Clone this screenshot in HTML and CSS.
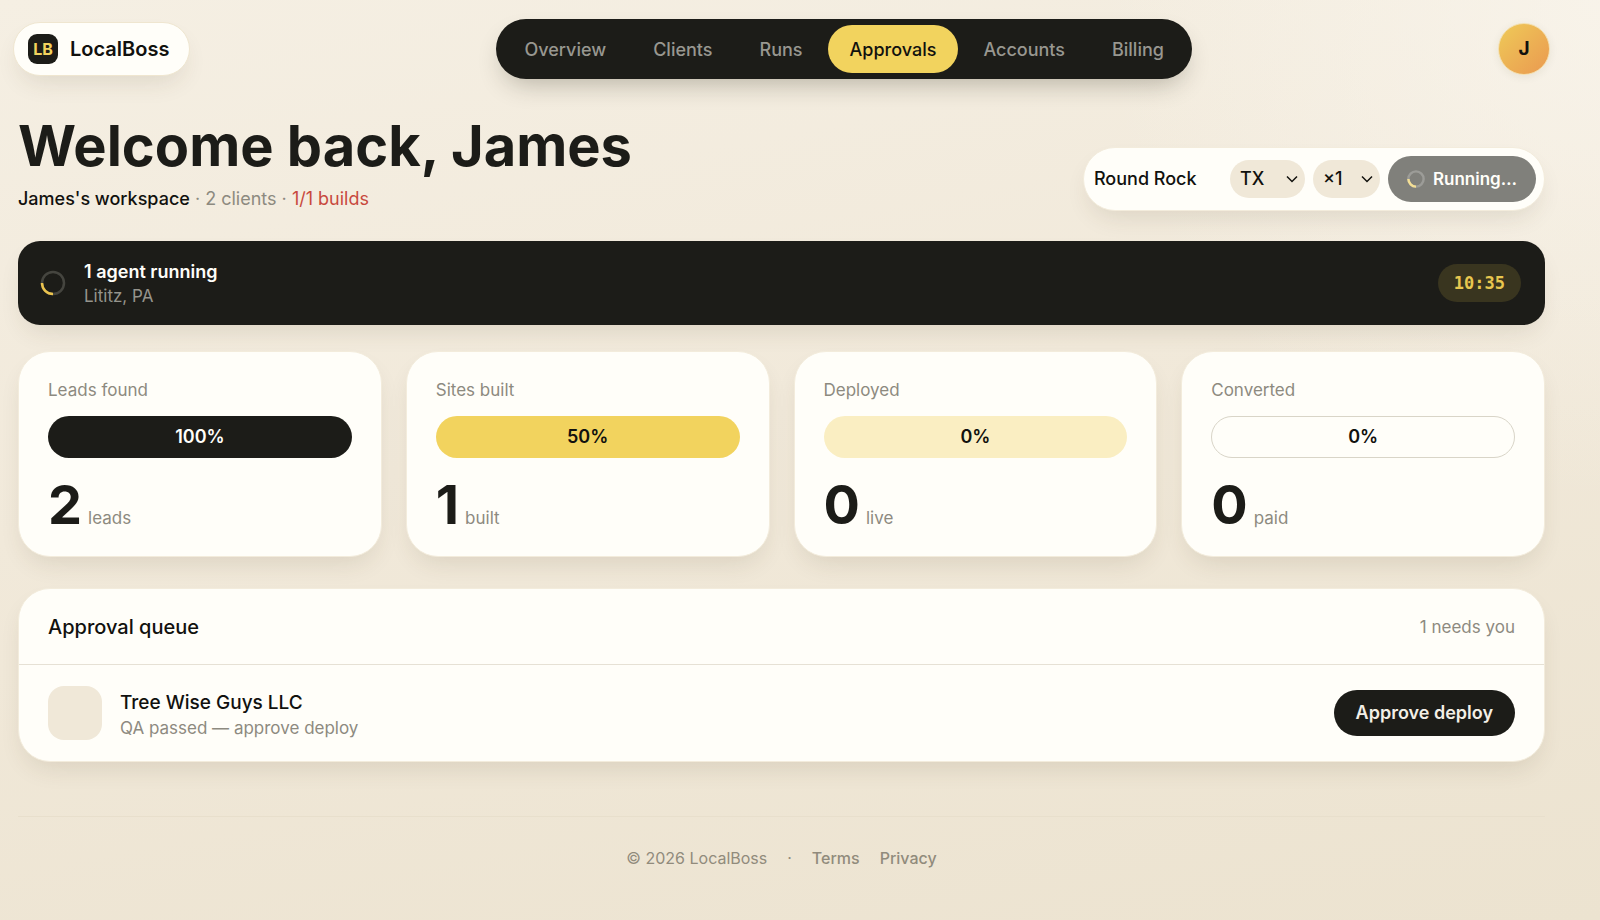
FILE: index.html
```html
<!DOCTYPE html>
<html lang="en">
  <head>
    <meta charset="utf-8">
    <meta name="viewport" content="width=device-width, initial-scale=1">
    <title>LocalBoss</title>
    <link rel="stylesheet" href="styles.css">
  </head>
  <body>
    <header class="topbar">
      <a class="brand" href="#">
        <span class="brand-mark">LB</span>
        <span>LocalBoss</span>
      </a>
      <nav class="nav">
        <a class="nav-link" href="#">Overview</a>
        <a class="nav-link" href="#">Clients</a>
        <a class="nav-link" href="#">Runs</a>
        <a class="nav-link active" href="#" aria-current="page">Approvals</a>
        <a class="nav-link" href="#">Accounts</a>
        <a class="nav-link" href="#">Billing</a>
      </nav>
      <button class="avatar" type="button" aria-label="Account">J</button>
    </header>

    <main class="page">
      <section class="hero">
        <div>
          <h1>Welcome back, James</h1>
          <p class="meta"><strong>James's workspace</strong> · 2 clients · <span class="limit">1/1 builds</span></p>
        </div>
        <form class="run-form">
          <input class="city" type="text" value="Round Rock" aria-label="City">
          <div class="select state">
            <select aria-label="State"><option>TX</option></select>
            <svg class="chevron" viewBox="0 0 12 12"><path d="M1 3.500 6 8.500 11 3.500"/></svg>
          </div>
          <div class="select count">
            <select aria-label="Count"><option>×1</option></select>
            <svg class="chevron" viewBox="0 0 12 12"><path d="M1 3.500 6 8.500 11 3.500"/></svg>
          </div>
          <button class="run-btn" type="button" disabled>
            <svg class="spinner small" viewBox="0 0 26 26">
              <circle class="track" cx="13" cy="13" r="11"/>
              <path class="arc" d="M13 24A11 11 0 0 1 2 13"/>
            </svg>
            Running…
          </button>
        </form>
      </section>

      <section class="agent">
        <svg class="spinner" viewBox="0 0 26 26">
          <circle class="track" cx="13" cy="13" r="11"/>
          <path class="arc" d="M13 24A11 11 0 0 1 2 13"/>
        </svg>
        <div class="agent-text">
          <div class="agent-title">1 agent running</div>
          <div class="agent-place">Lititz, PA</div>
        </div>
        <span class="timer">10:35</span>
      </section>

      <section class="stats">
        <div class="card stat">
          <div class="label">Leads found</div>
          <div class="bar dark">100%</div>
          <div class="figure"><span class="num">2</span><span class="unit">leads</span></div>
        </div>
        <div class="card stat">
          <div class="label">Sites built</div>
          <div class="bar gold">50%</div>
          <div class="figure"><span class="num">1</span><span class="unit">built</span></div>
        </div>
        <div class="card stat">
          <div class="label">Deployed</div>
          <div class="bar pale">0%</div>
          <div class="figure"><span class="num">0</span><span class="unit">live</span></div>
        </div>
        <div class="card stat">
          <div class="label">Converted</div>
          <div class="bar outline">0%</div>
          <div class="figure"><span class="num">0</span><span class="unit">paid</span></div>
        </div>
      </section>

      <section class="card queue">
        <div class="queue-head">
          <h2>Approval queue</h2>
          <span class="label">1 needs you</span>
        </div>
        <div class="queue-row">
          <div class="thumb"></div>
          <div class="queue-text">
            <div class="queue-name">Tree Wise Guys LLC</div>
            <div class="queue-note">QA passed — approve deploy</div>
          </div>
          <button class="approve" type="button">Approve deploy</button>
        </div>
      </section>

      <footer class="footer">
        <span>© 2026 LocalBoss</span>
        <span class="dot">·</span>
        <a href="#">Terms</a>
        <a href="#">Privacy</a>
      </footer>
    </main>
  </body>
</html>
```

FILE: styles.css
```css
:root {
  --ink: #1c1c18;
  --muted: #8d8a80;
  --gold: #f2d35e;
  --paper: #fffef9;
  --sand: #f0e8d8;
  --shadow: 0 12px 26px -8px rgba(70, 60, 30, 0.14);
}
* {
  box-sizing: border-box;
}
body {
  margin: 0;
  min-height: 100vh;
  font-family: Inter, "Liberation Sans", sans-serif;
  font-size: 17px;
  line-height: 24px;
  color: #11110e;
  background:
    radial-gradient(circle at 100% 0, rgba(250, 246, 238, 0.7), transparent 500px),
    linear-gradient(170deg, #f5efe3 0%, #f1e9da 45%, #ece3d0 100%);
}
a {
  color: inherit;
  text-decoration: none;
}
button, input, select {
  font: inherit;
  color: inherit;
  border: 0;
}
h1, h2, p {
  margin: 0;
}

/* top bar */
.topbar {
  display: flex;
  justify-content: space-between;
  align-items: center;
  padding: 19px 50px 0 13px;
}
.brand {
  display: flex;
  align-items: center;
  gap: 12px;
  height: 54px;
  padding: 0 20px 0 14px;
  border: 1px solid #efe6d0;
  border-radius: 27px;
  background: var(--paper);
  box-shadow: var(--shadow);
  font-size: 20px;
  font-weight: 600;
}
.brand-mark {
  width: 30px;
  height: 30px;
  border-radius: 9px;
  background: var(--ink);
  color: var(--gold);
  font-size: 16px;
  font-weight: 700;
  line-height: 30px;
  text-align: center;
}
.nav {
  display: flex;
  gap: 3px;
  padding: 6px;
  border-radius: 30px;
  background: var(--ink);
  box-shadow: 0 12px 26px -8px rgba(40, 35, 20, 0.3);
}
.nav-link {
  padding: 13px 22px 11px;
  border-radius: 24px;
  color: #989790;
  font-size: 18px;
  font-weight: 500;
}
.nav-link.active {
  background: var(--gold);
  color: #11110e;
}
.avatar {
  width: 52px;
  height: 52px;
  padding: 0;
  border: 1px solid #f3dfae;
  border-radius: 50%;
  background: linear-gradient(135deg, #efcb58, #ea9850) border-box;
  box-shadow: 0 2px 8px rgba(70, 60, 30, 0.08);
  font-size: 19px;
  font-weight: 700;
}

/* heading and run form */
.page {
  padding: 35px 55px 0 18px;
}
.hero {
  display: flex;
  justify-content: space-between;
  align-items: flex-end;
  margin-bottom: 30px;
}
h1 {
  font-size: 56px;
  font-weight: 700;
  line-height: 64px;
  color: var(--ink);
}
.meta {
  margin-top: 8px;
  font-size: 18px;
  line-height: 25px;
  color: var(--muted);
}
.meta strong {
  font-weight: 500;
  color: #11110e;
}
.limit {
  color: #c8493d;
}
.run-form {
  display: flex;
  align-items: center;
  gap: 8px;
  padding: 8px;
  border: 1px solid #f3ecdc;
  border-radius: 32px;
  background: var(--paper);
  box-shadow: var(--shadow);
  font-size: 18px;
  font-weight: 500;
}
.city {
  width: 130px;
  padding: 0 2px;
  background: none;
}
.select {
  position: relative;
}
.select select {
  width: 100%;
  height: 38px;
  padding: 0 10px;
  border-radius: 19px;
  background: var(--sand);
  appearance: none;
}
.state {
  width: 75px;
}
.count {
  width: 67px;
}
.chevron {
  position: absolute;
  top: 13px;
  right: 7px;
  width: 12px;
  height: 12px;
  fill: none;
  stroke: #11110e;
  stroke-width: 1.5;
  pointer-events: none;
}
.run-btn {
  display: flex;
  align-items: center;
  gap: 8px;
  height: 46px;
  padding: 0 19px;
  border-radius: 23px;
  background: #80807b;
  color: #fffef9;
  font-size: 17px;
  font-weight: 600;
}
.spinner {
  width: 26px;
  height: 26px;
  fill: none;
  stroke-width: 2.5;
}
.spinner .track {
  stroke: #45453f;
}
.spinner .arc {
  stroke: #eac34e;
}
.spinner.small {
  width: 18px;
  height: 18px;
  stroke-width: 3.5;
}
.small .track {
  stroke: #9c9c98;
}
.small .arc {
  stroke: #f4df95;
}

/* running agent */
.agent {
  display: flex;
  align-items: center;
  gap: 18px;
  height: 84px;
  margin-bottom: 26px;
  padding: 0 24px 0 22px;
  border-radius: 22px;
  background: var(--ink);
  box-shadow: var(--shadow);
}
.agent-text {
  flex: 1;
}
.agent-title {
  font-size: 18px;
  font-weight: 600;
  line-height: 25px;
  color: #fffef9;
}
.agent-place {
  color: #95948c;
}
.timer {
  padding: 7px 16px;
  border-radius: 19px;
  background: #39351f;
  color: #e8c74f;
  font-family: "DejaVu Sans Mono", monospace;
  font-weight: 700;
}

/* cards */
.card {
  border: 1px solid #f3ecdc;
  border-radius: 32px;
  background: var(--paper);
  box-shadow: var(--shadow);
}
.stats {
  display: grid;
  grid-template-columns: repeat(4, 1fr);
  gap: 24px;
  margin-bottom: 31px;
}
.stat {
  padding: 26px 29px 23px;
}
.label {
  color: var(--muted);
}
.bar {
  height: 42px;
  margin: 14px 0 19px;
  border-radius: 21px;
  font-size: 18px;
  font-weight: 600;
  line-height: 42px;
  text-align: center;
}
.dark {
  background: var(--ink);
  color: #fffef9;
}
.gold {
  background: var(--gold);
}
.pale {
  background: #faeec2;
}
.outline {
  border: 1px solid #d9d5c8;
  line-height: 40px;
}
.figure {
  display: flex;
  align-items: baseline;
  gap: 6px;
}
.num {
  font-size: 54px;
  font-weight: 700;
  line-height: 56px;
  color: var(--ink);
}
.unit {
  color: var(--muted);
}

/* approval queue */
.queue-head, .queue-row {
  display: flex;
  align-items: center;
  padding: 0 29px;
}
.queue-head {
  justify-content: space-between;
  height: 76px;
  border-bottom: 1px solid #e6e1d5;
}
h2 {
  font-size: 20px;
  font-weight: 500;
}
.queue-row {
  gap: 18px;
  height: 96px;
}
.thumb {
  width: 54px;
  height: 54px;
  border-radius: 16px;
  background: var(--sand);
}
.queue-text {
  flex: 1;
  padding-top: 4px;
}
.queue-name {
  font-size: 19px;
  font-weight: 500;
  line-height: 26px;
}
.queue-note {
  color: var(--muted);
}
.approve {
  height: 46px;
  padding: 0 22px;
  border-radius: 23px;
  background: var(--ink);
  color: #f3efe6;
  font-size: 18px;
  font-weight: 600;
}

/* footer */
.footer {
  display: flex;
  justify-content: center;
  gap: 20px;
  margin-top: 54px;
  padding: 29px 0;
  border-top: 1px solid #e8dfcc;
  color: #918b7c;
  font-size: 16px;
}
.footer a {
  font-weight: 500;
}
```
